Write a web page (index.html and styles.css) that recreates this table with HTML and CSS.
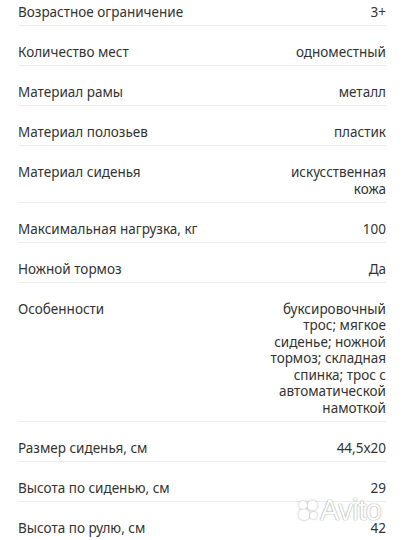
FILE: index.html
```html
<!DOCTYPE html>
<html lang="ru">
<head>
<meta charset="utf-8">
<link rel="stylesheet" href="styles.css">
</head>
<body>
<div class="page">
  <div class="specs">
    <div class="row"><div class="label">Возрастное ограничение</div><div class="value">3+</div></div>
    <div class="row"><div class="label">Количество мест</div><div class="value">одноместный</div></div>
    <div class="row"><div class="label">Материал рамы</div><div class="value">металл</div></div>
    <div class="row"><div class="label">Материал полозьев</div><div class="value">пластик</div></div>
    <div class="row"><div class="label">Материал сиденья</div><div class="value">искусственная кожа</div></div>
    <div class="row"><div class="label">Максимальная нагрузка, кг</div><div class="value">100</div></div>
    <div class="row"><div class="label">Ножной тормоз</div><div class="value">Да</div></div>
    <div class="row"><div class="label">Особенности</div><div class="value">буксировочный трос; мягкое сиденье; ножной тормоз; складная спинка; трос с автоматической намоткой</div></div>
    <div class="row"><div class="label">Размер сиденья, см</div><div class="value">44,5x20</div></div>
    <div class="row"><div class="label">Высота по сиденью, см</div><div class="value">29</div></div>
    <div class="row"><div class="label">Высота по рулю, см</div><div class="value">42</div></div>
  </div>
  <div class="watermark">
    <svg class="wm-dots" width="22" height="22" viewBox="0 0 22 22">
      <circle cx="6" cy="6" r="4" />
      <circle cx="15.5" cy="6.5" r="5" />
      <circle cx="7" cy="15.5" r="5.5" />
      <circle cx="16.5" cy="16.5" r="3.5" />
    </svg>
    <span class="wm-text">Avito</span>
  </div>
</div>
</body>
</html>
```
FILE: styles.css
```css
html, body {
  margin: 0;
  padding: 0;
  background: #ffffff;
}
body {
  width: 404px;
  height: 540px;
  overflow: hidden;
  font-family: "Noto Sans", "Open Sans", sans-serif;
  color: #333333;
}
.page {
  position: relative;
  height: 540px;
  overflow: hidden;
}
.specs {
  display: flex;
  flex-direction: column;
  padding: 0 18px;
  margin-top: -14px;
}
.row {
  display: flex;
  justify-content: space-between;
  align-items: flex-start;
  gap: 16px;
  padding: 18px 0 4.5px;
  border-bottom: 1px solid #ececec;
  font-size: 13.5px;
  line-height: 16.5px;
}
.label {
  flex: 1 1 auto;
}
.value {
  flex: 0 1 auto;
  max-width: 122px;
  text-align: right;
}
.watermark {
  position: absolute;
  left: 297px;
  top: 495px;
  display: flex;
  align-items: center;
  gap: 1px;
}
.wm-dots {
  display: block;
  filter: drop-shadow(0 0 1px rgba(0,0,0,0.35));
}
.wm-dots circle {
  fill: #ffffff;
}
.wm-text {
  font-family: "Liberation Sans", Arial, sans-serif;
  font-size: 29px;
  line-height: 30px;
  color: #ffffff;
  letter-spacing: -0.5px;
  text-shadow: 0 0 1px rgba(0,0,0,0.45), 0 0 2px rgba(0,0,0,0.2);
}
```
